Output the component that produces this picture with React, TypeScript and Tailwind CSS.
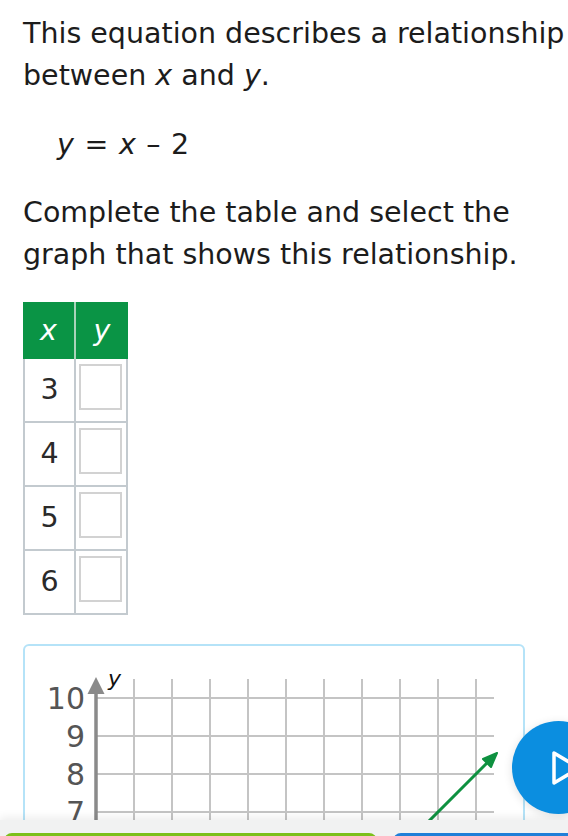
import React from "react";

const rows = [3, 4, 5, 6];

function Graph() {
    const ox = 71;
    const top = 52;
    const step = 38;
    const xs = Array.from({ length: 10 }, (_, i) => ox + step * (i + 1));
    const ys = Array.from({ length: 11 }, (_, i) => top + step * i);
    const labels = [10, 9, 8, 7, 6, 5, 4, 3, 2, 1];

    return (
        <svg width="498" height="470" viewBox="0 0 498 470" className="block">
            {xs.map((x) => (
                <line key={`v${x}`} x1={x} y1={33} x2={x} y2={top + step * 10} stroke="#c4c4c4" strokeWidth="2" />
            ))}
            {ys.map((y) => (
                <line key={`h${y}`} x1={ox} y1={y} x2={469} y2={y} stroke="#c4c4c4" strokeWidth="2" />
            ))}
            {labels.map((n, i) => (
                <text
                    key={n}
                    x={60}
                    y={top + step * i + 11}
                    textAnchor="end"
                    fontSize="30"
                    fill="#555"
                    fontFamily="'DejaVu Sans', sans-serif"
                >
                    {n}
                </text>
            ))}
            <line x1={ox} y1={46} x2={ox} y2={top + step * 10} stroke="#8a8a8a" strokeWidth="3.5" />
            <polygon points={`${ox},31 ${ox - 8.5},48 ${ox + 8.5},48`} fill="#8a8a8a" />
            <text x={83} y={40} fontSize="22" fontStyle="italic" fill="#111" fontFamily="'DejaVu Sans', sans-serif">
                y
            </text>
            {/* y = x - 2 */}
            <line x1={147} y1={432} x2={463} y2={116} stroke="#0e9140" strokeWidth="3" />
            <polygon points="472,107 458,113 466,121" fill="#0e9140" stroke="#0e9140" strokeWidth="2" strokeLinejoin="round" />
        </svg>
    );
}

export default function App() {
    return (
        <div
            className="relative w-[568px] h-[836px] overflow-hidden bg-white flex flex-col text-[#1c1c1c]"
            style={{ fontFamily: "'DejaVu Sans', Verdana, sans-serif" }}
        >
            <main className="flex-1 overflow-hidden pl-[23px] pt-[13px] text-[28.5px] leading-[42px]">
                <p className="whitespace-nowrap">
                    This equation describes a relationship
                    <br />
                    between <i>x</i> and <i>y</i>.
                </p>
                <p className="mt-[27px] pl-[34px] whitespace-nowrap [word-spacing:1.5px]">
                    <i>y</i> = <i>x</i> – 2
                </p>
                <p className="mt-[26px] whitespace-nowrap">
                    Complete the table and select the
                    <br />
                    graph that shows this relationship.
                </p>

                <div className="mt-[26px] w-[105px]">
                    <div className="flex h-[57px] bg-[#0a9445] text-white italic">
                        <div className="w-[51px] flex items-center justify-center">x</div>
                        <div className="flex-1 border-l-2 border-[#a9d3ba] flex items-center justify-center">y</div>
                    </div>
                    {rows.map((n) => (
                        <div key={n} className="flex h-[64px] border-x-2 border-b-2 border-[#c3cacf]">
                            <div className="w-[49px] flex items-center justify-center text-[#2a2a2a]">{n}</div>
                            <div className="flex-1 border-l-2 border-[#c3cacf] pl-[3px] pt-[5px]">
                                <div className="w-[43px] h-[46px] border-2 border-[#d2d2d2] bg-white" />
                            </div>
                        </div>
                    ))}
                </div>

                <div className="mt-[29px] w-[502px] border-2 border-[#b5e3f8] rounded-[6px] bg-white">
                    <Graph />
                </div>
            </main>

            <footer className="h-[16px] shrink-0 bg-[#f1f2f2] shadow-[0_-3px_8px_rgba(0,0,0,0.07)] flex items-start gap-[16px] pl-[4px] pt-[13px] z-10">
                <div className="w-[373px] h-[20px] rounded-t-[8px] bg-[#7cc01b]" />
                <div className="flex-1 h-[20px] rounded-tl-[8px] bg-[#1f7fd8]" />
            </footer>

            <button className="absolute left-[512px] top-[721px] w-[93px] h-[93px] rounded-full bg-[#0b8ee0] shadow-[0_2px_10px_rgba(0,0,0,0.12)] flex items-center">
                <svg width="93" height="93" viewBox="0 0 93 93" className="block">
                    <polygon
                        points="42,32 42,62 67,47"
                        fill="none"
                        stroke="white"
                        strokeWidth="3.5"
                        strokeLinejoin="round"
                    />
                </svg>
            </button>
        </div>
    );
}
